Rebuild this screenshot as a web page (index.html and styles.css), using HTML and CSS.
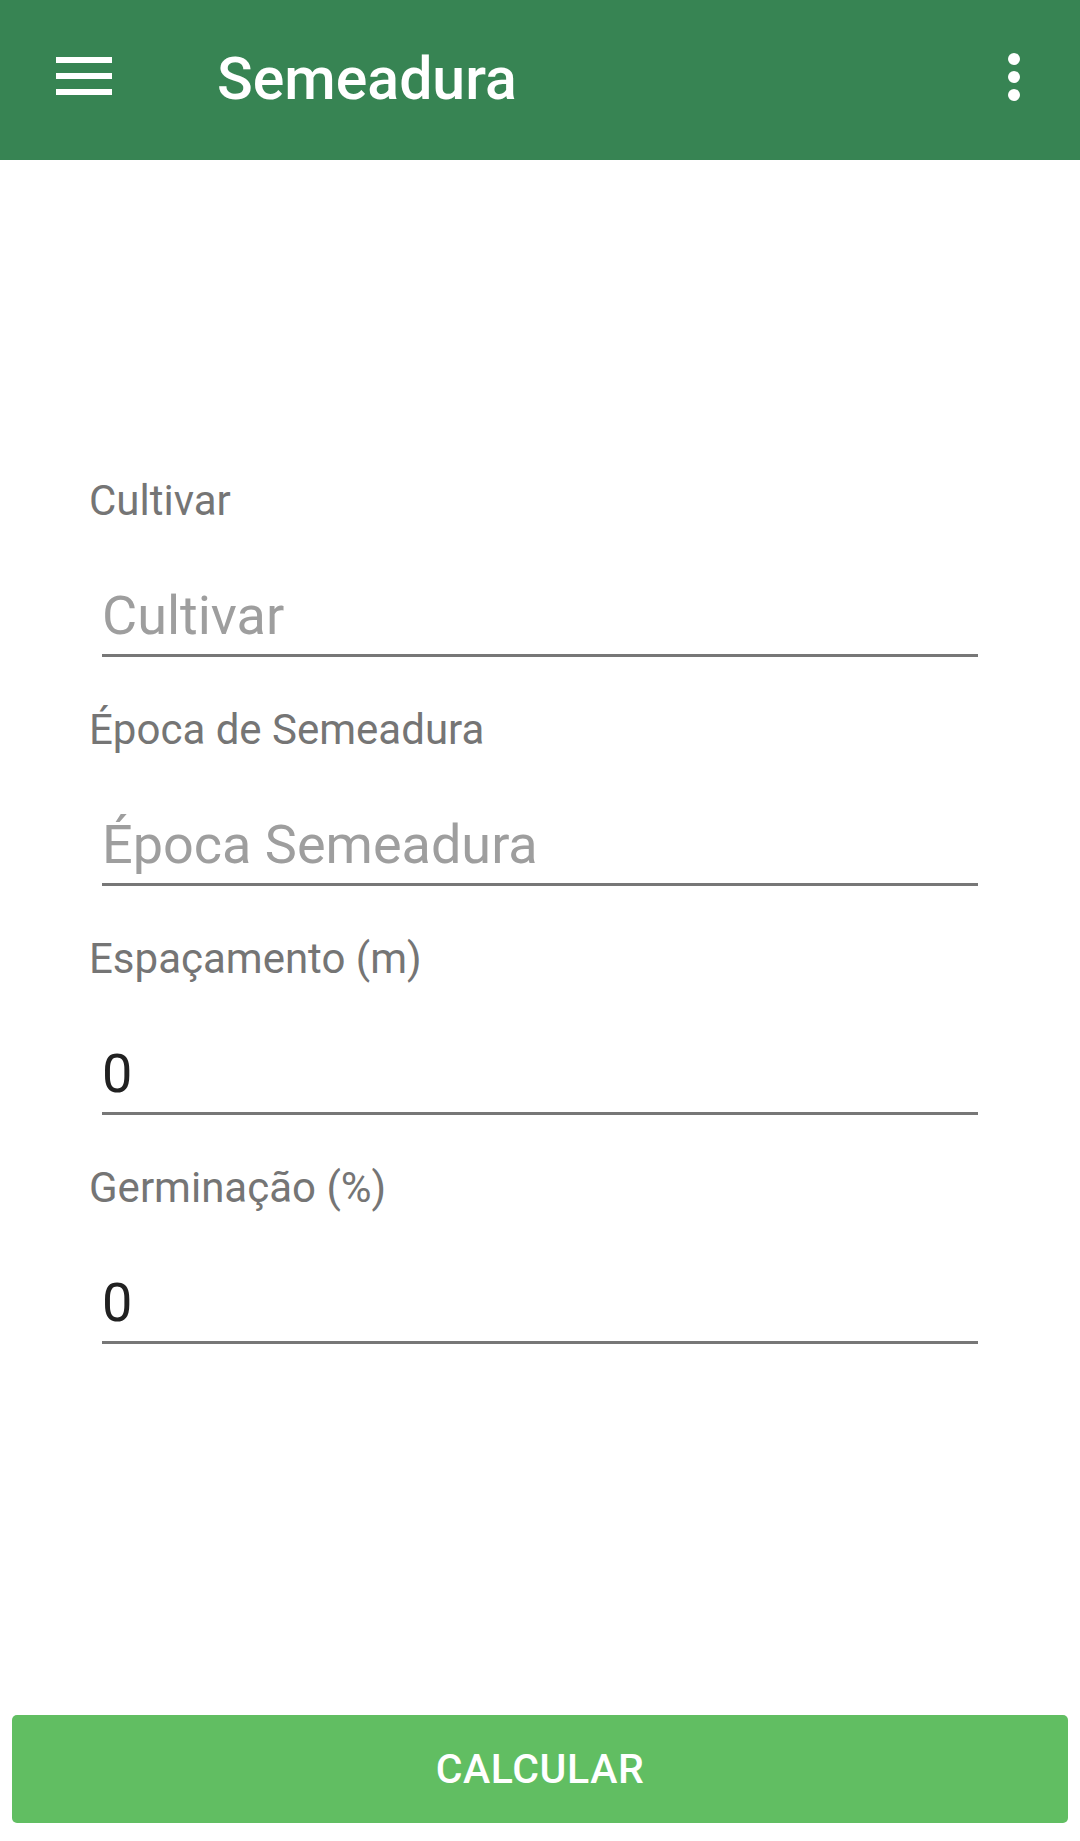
FILE: index.html
```html
<!DOCTYPE html>
<html lang="pt">
<head>
<meta charset="utf-8">
<title>Semeadura</title>
<link rel="stylesheet" href="styles.css">
</head>
<body>
<div class="app">
  <header class="toolbar">
    <svg class="menu-icon" width="56" height="38" viewBox="0 0 56 38">
      <rect x="0" y="0" width="56" height="6" fill="#fff"/>
      <rect x="0" y="16" width="56" height="6" fill="#fff"/>
      <rect x="0" y="32" width="56" height="6" fill="#fff"/>
    </svg>
    <h1 class="title">Semeadura</h1>
    <svg class="more-icon" width="12" height="48" viewBox="0 0 12 48">
      <circle cx="6" cy="6" r="6" fill="#fff"/>
      <circle cx="6" cy="24" r="6" fill="#fff"/>
      <circle cx="6" cy="42" r="6" fill="#fff"/>
    </svg>
  </header>
  <main class="form">
    <div class="field">
      <div class="label">Cultivar</div>
      <div class="input placeholder">Cultivar</div>
    </div>
    <div class="field">
      <div class="label">Época de Semeadura</div>
      <div class="input placeholder">Época Semeadura</div>
    </div>
    <div class="field">
      <div class="label">Espaçamento (m)</div>
      <div class="input">0</div>
    </div>
    <div class="field">
      <div class="label">Germinação (%)</div>
      <div class="input">0</div>
    </div>
  </main>
  <footer class="actions">
    <button class="btn">CALCULAR</button>
  </footer>
</div>
</body>
</html>
```
FILE: styles.css
```css
html, body {
  margin: 0;
  padding: 0;
  background: #ffffff;
}
body {
  font-family: Roboto, "Noto Sans", "Liberation Sans", sans-serif;
}
.app {
  display: flex;
  flex-direction: column;
  height: 1841px;
}
.toolbar {
  height: 160px;
  flex: 0 0 160px;
  box-sizing: border-box;
  background: #378453;
  display: flex;
  align-items: flex-start;
  padding-left: 56px;
}
.menu-icon {
  margin-top: 57px;
  flex: 0 0 auto;
}
.title {
  margin: 44px 0 0 105px;
  font-size: 59px;
  font-weight: 500;
  line-height: normal;
  color: #ffffff;
  flex: 1 1 auto;
}
.more-icon {
  margin-top: 53px;
  margin-right: 60px;
  flex: 0 0 auto;
}
.form {
  flex: 1 1 auto;
  padding: 316px 102px 0 89px;
  display: flex;
  flex-direction: column;
  gap: 48px;
}
.field {
  display: flex;
  flex-direction: column;
}
.label {
  font-size: 42px;
  line-height: 50px;
  color: #757575;
  margin-bottom: 57px;
}
.input {
  margin-left: 13px;
  font-size: 54px;
  line-height: 66px;
  color: #212121;
  padding-bottom: 5px;
  border-bottom: 3px solid #777777;
}
.input.placeholder {
  color: #9e9e9e;
}
.actions {
  padding: 0 12px 18px;
}
.btn {
  display: flex;
  align-items: center;
  justify-content: center;
  width: 100%;
  height: 108px;
  border: none;
  border-radius: 5px;
  background: #61be62;
  color: #ffffff;
  font-family: Roboto, "Noto Sans", "Liberation Sans", sans-serif;
  font-size: 41px;
  font-weight: 500;
  letter-spacing: 0.6px;
  padding: 0;
}
```
